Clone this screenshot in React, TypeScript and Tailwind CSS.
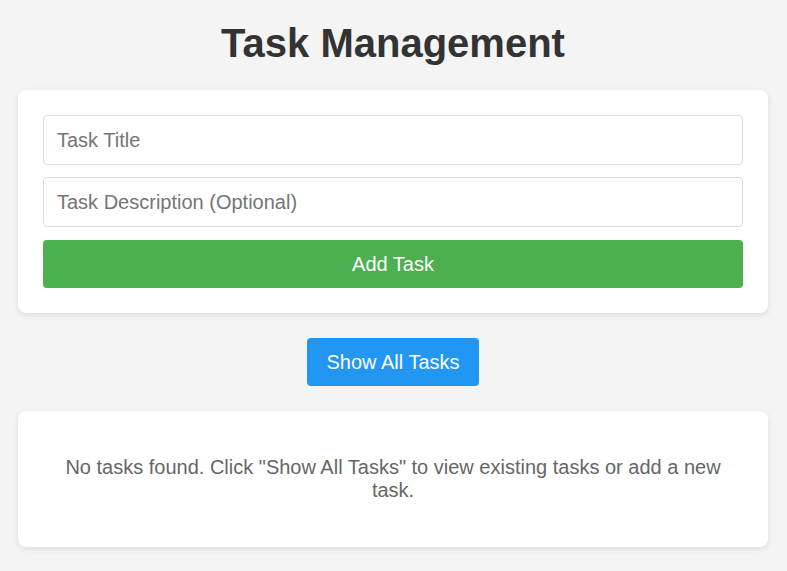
import { useState } from "react";

export default function App() {
  const [title, setTitle] = useState("");
  const [description, setDescription] = useState("");

  return (
    <main className="min-h-screen bg-[#f4f4f4] pl-[18px] pr-[19px] pt-5 pb-6 font-['Liberation_Sans',Arial,sans-serif]">
      <div className="max-w-[750px]">
        <h1 className="mb-6 text-center text-[40px] font-bold leading-[46px] text-[#333]">
          Task Management
        </h1>

        <section className="flex flex-col rounded-lg bg-white p-[25px] shadow-[0_2px_6px_rgba(0,0,0,0.1)]">
          <input
            value={title}
            onChange={(e) => setTitle(e.target.value)}
            placeholder="Task Title"
            className="h-[50px] w-full rounded border border-[#ddd] px-[13px] text-[20px] text-[#333] outline-none placeholder:text-[#757575]"
          />
          <input
            value={description}
            onChange={(e) => setDescription(e.target.value)}
            placeholder="Task Description (Optional)"
            className="mt-3 h-[50px] w-full rounded border border-[#ddd] px-[13px] text-[20px] text-[#333] outline-none placeholder:text-[#757575]"
          />
          <button className="mt-[13px] h-12 w-full rounded bg-[#4CAF50] text-[20px] text-white">
            Add Task
          </button>
        </section>

        <div className="mt-[25px] flex justify-center">
          <button className="h-12 rounded bg-[#2196F3] px-[19px] text-[20px] text-white">
            Show All Tasks
          </button>
        </div>

        <section className="mt-[25px] rounded-lg bg-white px-[25px] py-[45px] shadow-[0_2px_6px_rgba(0,0,0,0.1)]">
          <p className="text-center text-[20px] leading-[23px] text-[#666]">
            No tasks found. Click "Show All Tasks" to view existing tasks or add a new task.
          </p>
        </section>
      </div>
    </main>
  );
}
